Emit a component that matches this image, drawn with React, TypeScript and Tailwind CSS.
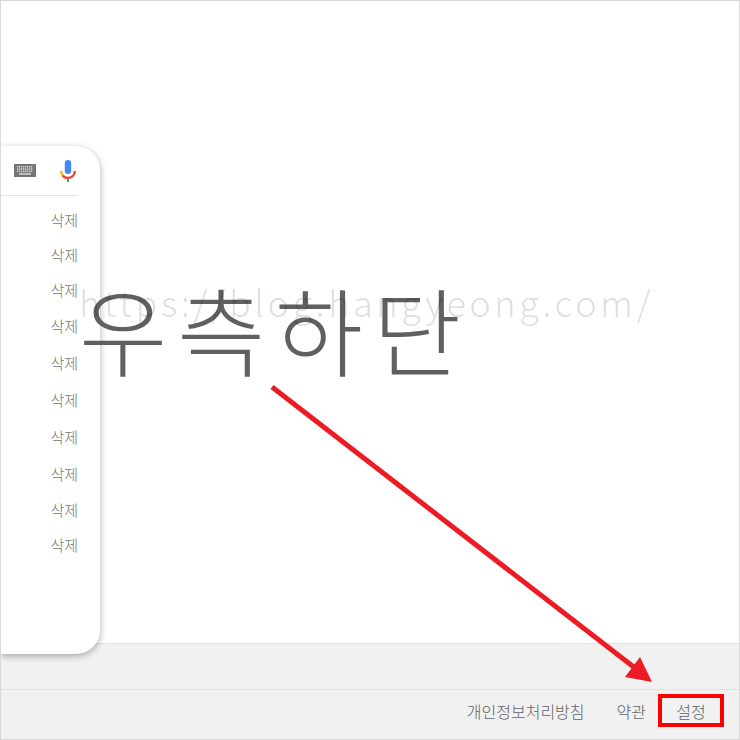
import { Fragment } from 'react'

const history = [
  { id: 1, tall: false },
  { id: 2, tall: false },
  { id: 3, tall: false },
  { id: 4, tall: true },
  { id: 5, tall: true },
  { id: 6, tall: true },
  { id: 7, tall: true },
  { id: 8, tall: true },
  { id: 9, tall: false },
  { id: 10, tall: false },
]

const keyColumns = [3, 5, 7, 9, 11, 13, 15, 17]

function KeyboardIcon() {
  return (
    <svg width="22" height="13" viewBox="0 0 22 13" aria-hidden="true">
      <rect width="22" height="13" rx="0.5" fill="#757575" />
      {keyColumns.map((x) => (
        <Fragment key={x}>
          <rect x={x} y="2" width="1.3" height="1.5" fill="#d8d8d8" />
          <rect x={x} y="4.3" width="1.3" height="1.5" fill="#d8d8d8" />
          <rect x={x} y="6.6" width="1.3" height="1.5" fill="#d8d8d8" />
        </Fragment>
      ))}
      <rect x="5" y="9.3" width="12" height="1.3" fill="#e4e4e4" />
    </svg>
  )
}

function MicIcon() {
  return (
    <svg width="16" height="22" viewBox="0 0 16 22" aria-hidden="true">
      <rect x="4.8" y="0" width="6.4" height="14" rx="3.2" fill="#4285f4" />
      <path d="M7 18h2v4H7z" fill="#34a853" />
      <path d="M1.2 11c0 2.3.7 4 2 5.2" fill="none" stroke="#fbbc05" strokeWidth="2.4" />
      <path d="M2.7 15.5C4.1 17.3 6 17.9 8 17.9c4 0 6.8-2.9 6.8-6.9" fill="none" stroke="#ea4335" strokeWidth="2.4" />
    </svg>
  )
}

export default function App() {
  return (
    <div className="relative flex min-h-screen flex-col overflow-hidden border border-[#d9d9d9] bg-white font-['Noto_Sans_CJK_KR','Noto_Sans',sans-serif]">
      <main className="flex flex-1 items-stretch pt-[145px]">
        {/* Search suggestions */}
        <section className="relative z-10 -mb-[11px] flex w-[99px] flex-col rounded-r-3xl bg-white shadow-[0_2px_7px_rgba(0,0,0,0.32)]">
          <div className="mr-[22px] flex h-[50px] items-center justify-end gap-6 border-b border-[#e3e3e3]">
            <button type="button" aria-label="키보드">
              <KeyboardIcon />
            </button>
            <button type="button" aria-label="음성 검색" className="-mr-0.5 w-5">
              <MicIcon />
            </button>
          </div>
          <ul className="mr-[22px] pt-1.5">
            {history.map((item) => (
              <li key={item.id} className={`flex items-center justify-end ${item.tall ? 'h-[37px]' : 'h-[35px]'}`}>
                <button type="button" className="text-[15px] leading-5 font-light text-[#70757a]">
                  삭제
                </button>
              </li>
            ))}
          </ul>
        </section>
      </main>

      <footer className="border-t border-[#e0e0e0] bg-[#f1f1f1] text-base text-[#5f6368]">
        <div className="h-[45px]" />
        <nav className="flex h-[50px] items-start justify-end border-t border-[#e0e0e0] pt-1 pr-[15px] font-light">
          <a href="#privacy" className="flex h-[33px] items-center px-4">개인정보처리방침</a>
          <a href="#terms" className="flex h-[33px] items-center pr-3 pl-4">약관</a>
          <a href="#settings" className="flex h-[33px] w-[66px] items-center justify-center border-4 border-[#ff0000]">설정</a>
        </nav>
      </footer>

      {/* Notes drawn over the page */}
      <p className="pointer-events-none absolute top-[255px] left-[78px] z-20 text-8xl leading-[144px] font-light tracking-widest whitespace-nowrap text-[#606060]">
        우측하단
      </p>
      <p className="pointer-events-none absolute top-[274px] left-[78px] z-20 text-4xl leading-[52px] font-light tracking-widest whitespace-nowrap text-black/15">
        https://blog.hangyeong.com/
      </p>
      <svg className="pointer-events-none absolute top-[384px] left-[268px] z-20" width="386" height="300" viewBox="0 0 386 300" aria-hidden="true">
        <path d="M3 2L366 283" stroke="#ed1c24" strokeWidth="5" />
        <path d="M383 297L371 272L356 292Z" fill="#ed1c24" />
      </svg>
    </div>
  )
}
